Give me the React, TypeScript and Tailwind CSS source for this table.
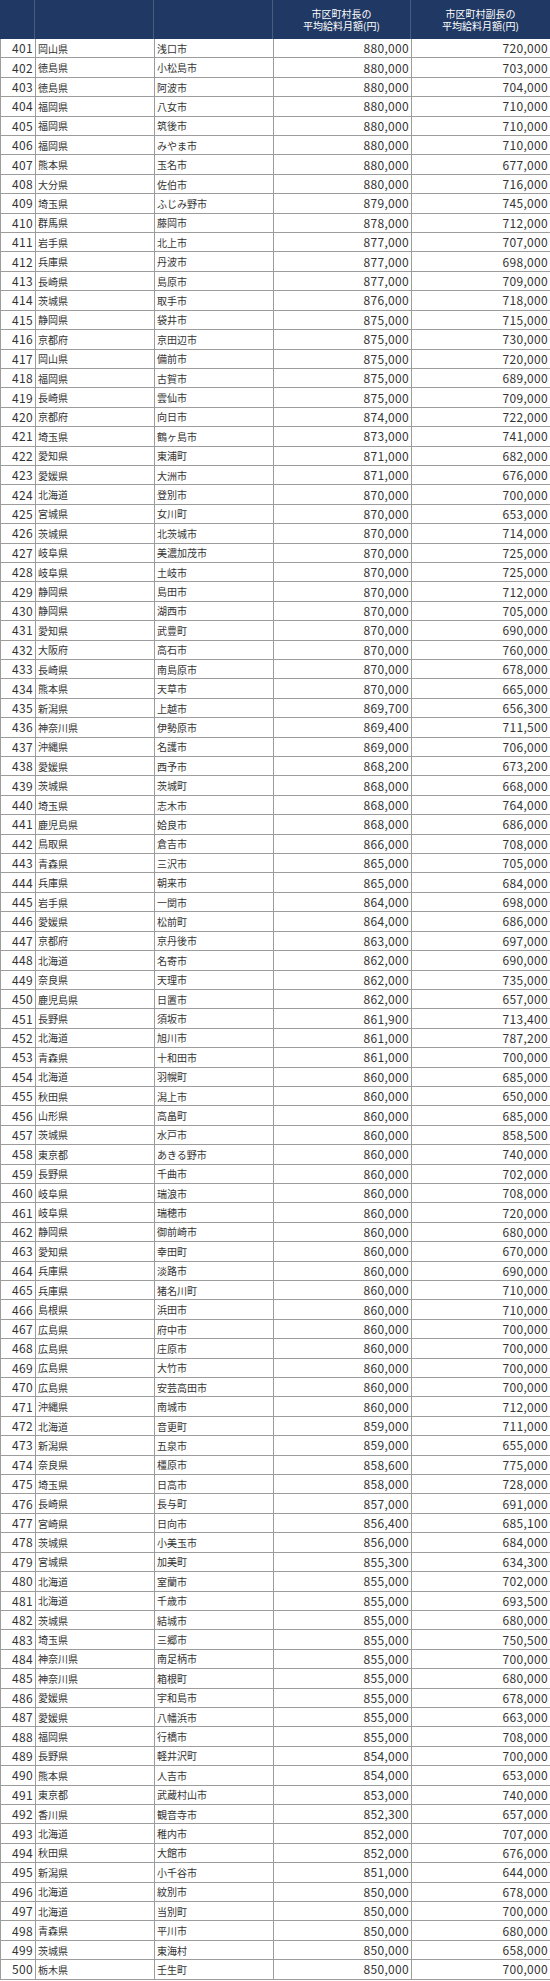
const rows: [number, string, string, string, string][] = [
  [401, "岡山県", "浅口市", "880,000", "720,000"],
  [402, "徳島県", "小松島市", "880,000", "703,000"],
  [403, "徳島県", "阿波市", "880,000", "704,000"],
  [404, "福岡県", "八女市", "880,000", "710,000"],
  [405, "福岡県", "筑後市", "880,000", "710,000"],
  [406, "福岡県", "みやま市", "880,000", "710,000"],
  [407, "熊本県", "玉名市", "880,000", "677,000"],
  [408, "大分県", "佐伯市", "880,000", "716,000"],
  [409, "埼玉県", "ふじみ野市", "879,000", "745,000"],
  [410, "群馬県", "藤岡市", "878,000", "712,000"],
  [411, "岩手県", "北上市", "877,000", "707,000"],
  [412, "兵庫県", "丹波市", "877,000", "698,000"],
  [413, "長崎県", "島原市", "877,000", "709,000"],
  [414, "茨城県", "取手市", "876,000", "718,000"],
  [415, "静岡県", "袋井市", "875,000", "715,000"],
  [416, "京都府", "京田辺市", "875,000", "730,000"],
  [417, "岡山県", "備前市", "875,000", "720,000"],
  [418, "福岡県", "古賀市", "875,000", "689,000"],
  [419, "長崎県", "雲仙市", "875,000", "709,000"],
  [420, "京都府", "向日市", "874,000", "722,000"],
  [421, "埼玉県", "鶴ヶ島市", "873,000", "741,000"],
  [422, "愛知県", "東浦町", "871,000", "682,000"],
  [423, "愛媛県", "大洲市", "871,000", "676,000"],
  [424, "北海道", "登別市", "870,000", "700,000"],
  [425, "宮城県", "女川町", "870,000", "653,000"],
  [426, "茨城県", "北茨城市", "870,000", "714,000"],
  [427, "岐阜県", "美濃加茂市", "870,000", "725,000"],
  [428, "岐阜県", "土岐市", "870,000", "725,000"],
  [429, "静岡県", "島田市", "870,000", "712,000"],
  [430, "静岡県", "湖西市", "870,000", "705,000"],
  [431, "愛知県", "武豊町", "870,000", "690,000"],
  [432, "大阪府", "高石市", "870,000", "760,000"],
  [433, "長崎県", "南島原市", "870,000", "678,000"],
  [434, "熊本県", "天草市", "870,000", "665,000"],
  [435, "新潟県", "上越市", "869,700", "656,300"],
  [436, "神奈川県", "伊勢原市", "869,400", "711,500"],
  [437, "沖縄県", "名護市", "869,000", "706,000"],
  [438, "愛媛県", "西予市", "868,200", "673,200"],
  [439, "茨城県", "茨城町", "868,000", "668,000"],
  [440, "埼玉県", "志木市", "868,000", "764,000"],
  [441, "鹿児島県", "姶良市", "868,000", "686,000"],
  [442, "鳥取県", "倉吉市", "866,000", "708,000"],
  [443, "青森県", "三沢市", "865,000", "705,000"],
  [444, "兵庫県", "朝来市", "865,000", "684,000"],
  [445, "岩手県", "一関市", "864,000", "698,000"],
  [446, "愛媛県", "松前町", "864,000", "686,000"],
  [447, "京都府", "京丹後市", "863,000", "697,000"],
  [448, "北海道", "名寄市", "862,000", "690,000"],
  [449, "奈良県", "天理市", "862,000", "735,000"],
  [450, "鹿児島県", "日置市", "862,000", "657,000"],
  [451, "長野県", "須坂市", "861,900", "713,400"],
  [452, "北海道", "旭川市", "861,000", "787,200"],
  [453, "青森県", "十和田市", "861,000", "700,000"],
  [454, "北海道", "羽幌町", "860,000", "685,000"],
  [455, "秋田県", "潟上市", "860,000", "650,000"],
  [456, "山形県", "高畠町", "860,000", "685,000"],
  [457, "茨城県", "水戸市", "860,000", "858,500"],
  [458, "東京都", "あきる野市", "860,000", "740,000"],
  [459, "長野県", "千曲市", "860,000", "702,000"],
  [460, "岐阜県", "瑞浪市", "860,000", "708,000"],
  [461, "岐阜県", "瑞穂市", "860,000", "720,000"],
  [462, "静岡県", "御前崎市", "860,000", "680,000"],
  [463, "愛知県", "幸田町", "860,000", "670,000"],
  [464, "兵庫県", "淡路市", "860,000", "690,000"],
  [465, "兵庫県", "猪名川町", "860,000", "710,000"],
  [466, "島根県", "浜田市", "860,000", "710,000"],
  [467, "広島県", "府中市", "860,000", "700,000"],
  [468, "広島県", "庄原市", "860,000", "700,000"],
  [469, "広島県", "大竹市", "860,000", "700,000"],
  [470, "広島県", "安芸高田市", "860,000", "700,000"],
  [471, "沖縄県", "南城市", "860,000", "712,000"],
  [472, "北海道", "音更町", "859,000", "711,000"],
  [473, "新潟県", "五泉市", "859,000", "655,000"],
  [474, "奈良県", "橿原市", "858,600", "775,000"],
  [475, "埼玉県", "日高市", "858,000", "728,000"],
  [476, "長崎県", "長与町", "857,000", "691,000"],
  [477, "宮崎県", "日向市", "856,400", "685,100"],
  [478, "茨城県", "小美玉市", "856,000", "684,000"],
  [479, "宮城県", "加美町", "855,300", "634,300"],
  [480, "北海道", "室蘭市", "855,000", "702,000"],
  [481, "北海道", "千歳市", "855,000", "693,500"],
  [482, "茨城県", "結城市", "855,000", "680,000"],
  [483, "埼玉県", "三郷市", "855,000", "750,500"],
  [484, "神奈川県", "南足柄市", "855,000", "700,000"],
  [485, "神奈川県", "箱根町", "855,000", "680,000"],
  [486, "愛媛県", "宇和島市", "855,000", "678,000"],
  [487, "愛媛県", "八幡浜市", "855,000", "663,000"],
  [488, "福岡県", "行橋市", "855,000", "708,000"],
  [489, "長野県", "軽井沢町", "854,000", "700,000"],
  [490, "熊本県", "人吉市", "854,000", "653,000"],
  [491, "東京都", "武蔵村山市", "853,000", "740,000"],
  [492, "香川県", "観音寺市", "852,300", "657,000"],
  [493, "北海道", "稚内市", "852,000", "707,000"],
  [494, "秋田県", "大館市", "852,000", "676,000"],
  [495, "新潟県", "小千谷市", "851,000", "644,000"],
  [496, "北海道", "紋別市", "850,000", "678,000"],
  [497, "北海道", "当別町", "850,000", "700,000"],
  [498, "青森県", "平川市", "850,000", "680,000"],
  [499, "茨城県", "東海村", "850,000", "658,000"],
  [500, "栃木県", "壬生町", "850,000", "700,000"],
];

const cols = "grid grid-cols-[35px_119px_119px_138px_139px]";

export default function App() {
  return (
    <div className="w-[550px] bg-white font-['Noto_Sans_CJK_JP',sans-serif] text-[#333]">
      {/* header */}
      <div className={`${cols} h-[39px] bg-[#1f3864] text-white text-[10px] leading-[12px]`}>
        <div className="border-r border-[#4b5b7e]" />
        <div className="border-r border-[#4b5b7e]" />
        <div className="border-r border-[#4b5b7e]" />
        <div className="border-r border-[#4b5b7e] flex flex-col items-center justify-center text-center pt-[1px]">
          <span>市区町村長の</span>
          <span>平均給料月額(円)</span>
        </div>
        <div className="flex flex-col items-center justify-center text-center pt-[1px]">
          <span>市区町村副長の</span>
          <span>平均給料月額(円)</span>
        </div>
      </div>

      {/* rows */}
      <div className="border-l border-[#9c9c9c]">
        {rows.map(([rank, pref, city, mayor, deputy]) => (
          <div key={rank} className={`${cols} h-[19.42px] border-b border-[#9c9c9c]`}>
            <div className="border-r border-[#9c9c9c] flex items-center justify-end pr-[2px] text-[12px] tracking-[0.3px]">
              {rank}
            </div>
            <div className="border-r border-[#9c9c9c] flex items-center pl-[2px] text-[10px]">{pref}</div>
            <div className="border-r border-[#9c9c9c] flex items-center pl-[2px] text-[10px]">{city}</div>
            <div className="border-r border-[#9c9c9c] flex items-center justify-end pr-[2px] text-[12px] tracking-[0.3px]">
              {mayor}
            </div>
            <div className="border-r border-[#9c9c9c] flex items-center justify-end pr-[2px] text-[12px] tracking-[0.3px]">
              {deputy}
            </div>
          </div>
        ))}
      </div>
    </div>
  );
}
